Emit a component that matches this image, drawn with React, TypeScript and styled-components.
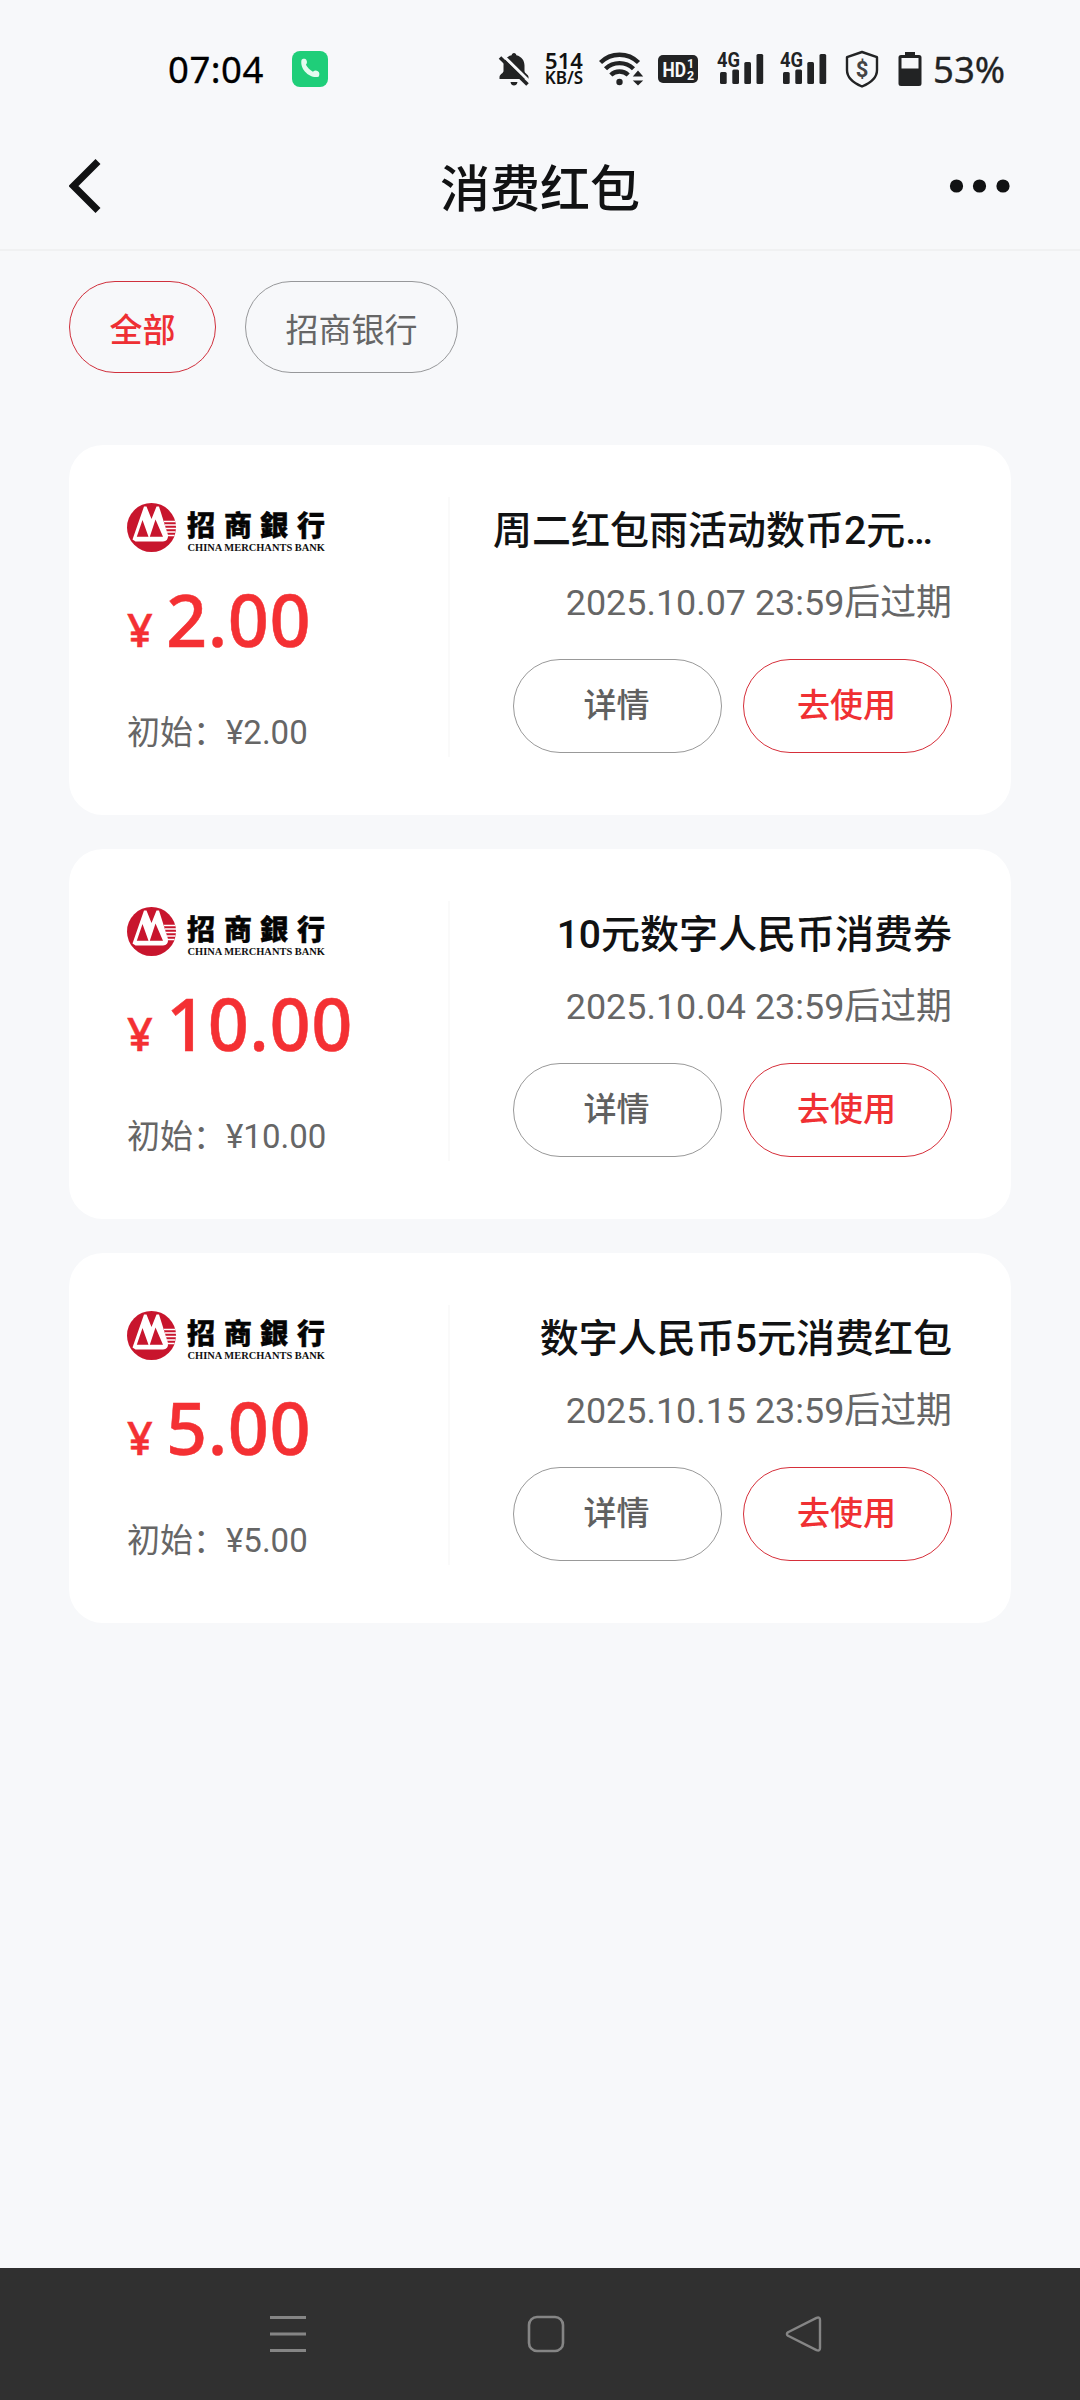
import React from 'react';
import styled, { createGlobalStyle } from 'styled-components';

const cjk = '"Noto Sans CJK SC", sans-serif';

const GlobalStyle = createGlobalStyle`
  * { box-sizing: border-box; }
  body { margin: 0; background: #f7f8fa; }
  button { font: inherit; background: none; border: 0; padding: 0; margin: 0; }
  svg { display: block; flex: none; }
`;

const Screen = styled.div`
  width: 1080px;
  height: 2400px;
  display: flex;
  flex-direction: column;
  background: #f7f8fa;
  font-family: Roboto, ${cjk};
  overflow: hidden;
`;

const StatusBar = styled.div`
  height: 138px;
  padding: 0 75px 0 168px;
  display: flex;
  align-items: center;
  font-family: 'Noto Sans', ${cjk};
  color: #222324;
`;

const StatusText = styled.span<{ $color?: string; $width: number; $gap?: number; $tracking?: number }>`
  width: ${p => p.$width}px;
  margin-left: ${p => p.$gap || 0}px;
  font-size: 36.5px;
  line-height: 54px;
  letter-spacing: ${p => p.$tracking || 0}px;
  white-space: nowrap;
  color: ${p => p.$color || '#222324'};
  -webkit-text-stroke: 0.3px currentColor;
`;

const StatusIcon = styled.svg<{ $gap: number }>`
  margin-left: ${p => p.$gap}px;
  fill: #222324;
`;

const NetSpeed = styled.div`
  width: 42px;
  margin-left: 14px;
  display: grid;
  justify-items: center;
  font-family: 'Noto Sans', sans-serif;
  font-weight: 600;
  color: #111;
`;

const SpeedLine = styled.span<{ $size: number }>`
  font-size: ${p => p.$size}px;
  line-height: 17.5px;
`;

const Header = styled.header`
  height: 113px;
  padding: 0 69px 15px;
  display: grid;
  grid-template-columns: 200px 1fr 200px;
  align-items: center;
  border-bottom: 2px solid #f0f1f2;
`;

const Title = styled.h1`
  margin: 8px 0 0;
  text-align: center;
  font-size: 50px;
  line-height: 60px;
  font-weight: 500;
  color: #111213;
`;

const MoreButton = styled.button`
  justify-self: end;
`;

const Tabs = styled.nav`
  padding: 30px 69px 0;
  display: flex;
  gap: 29px;
`;

const Tab = styled.button<{ $active?: boolean }>`
  height: 92px;
  padding: 8px 39.5px 0;
  border: 1px solid ${p => (p.$active ? '#d0303c' : '#97989a')};
  border-radius: 46px;
  font-size: 33px;
  line-height: 40px;
  font-weight: ${p => (p.$active ? 500 : 400)};
  color: ${p => (p.$active ? '#ee2f33' : '#666')};
`;

const CardList = styled.main`
  flex: 1;
  padding: 72px 69px 0;
  display: flex;
  flex-direction: column;
  gap: 34px;
`;

const Card = styled.article`
  height: 370px;
  padding: 52px 59px 58px 58px;
  display: flex;
  background: #fff;
  border-radius: 34px;
`;

const ValueSide = styled.div`
  width: 323px;
  border-right: 2px solid #fafafa;
  display: flex;
  flex-direction: column;
`;

const Amount = styled.div`
  height: 90px;
  margin-top: 23px;
  display: flex;
  align-items: baseline;
  font-family: 'Noto Sans', ${cjk};
  font-weight: 500;
  color: #f43033;
  line-height: 90px;
  -webkit-text-stroke: 0.5px currentColor;
`;

const Currency = styled.span`
  width: 39px;
  font-size: 45px;
`;

const AmountValue = styled.span`
  font-size: 72px;
  letter-spacing: 0.5px;
`;

const Initial = styled.div`
  margin-top: 49px;
  font-size: 33px;
  line-height: 40px;
  color: #666;
  white-space: nowrap;
`;

const InfoSide = styled.div`
  flex: 1;
  padding-left: 43px;
  display: flex;
  flex-direction: column;
`;

const CardTitle = styled.h2<{ $clipped?: boolean }>`
  margin: 9px 0 0;
  text-align: ${p => (p.$clipped ? 'left' : 'right')};
  font-size: 39px;
  line-height: 50px;
  font-weight: 500;
  color: #111213;
  white-space: nowrap;
`;

const Expiry = styled.div`
  margin-top: 25px;
  text-align: right;
  font-size: 35.9px;
  line-height: 44px;
  color: #666;
  white-space: nowrap;
`;

const Actions = styled.div`
  margin-top: 34px;
  display: flex;
  justify-content: flex-end;
  gap: 21px;
`;

const ActionButton = styled.button<{ $primary?: boolean }>`
  width: 209px;
  height: 94px;
  padding: 0 2px 6px 0;
  border: 1px solid ${p => (p.$primary ? '#d62f3a' : '#999')};
  border-radius: 47px;
  font-size: 33px;
  font-weight: 500;
  color: ${p => (p.$primary ? '#f03033' : '#606060')};
`;

const SystemNav = styled.footer`
  height: 132px;
  padding: 0 257px 0 269px;
  display: flex;
  align-items: center;
  justify-content: space-between;
  background: #303030;
`;

const BellOff = () => (
  <StatusIcon $gap={170} width="32" height="36" viewBox="0 0 32 36">
    <path d="M16 2c1.400 0 2.200 1 2.400 2.300C23.500 5.500 26.500 9.500 26.500 14.500v5.500c0 2.500 4 3.500 4 6v2H1.500v-2c0-3 4-3.500 4-6v-5.500C5.500 9.500 8.500 5.500 13.600 4.300 13.800 3 14.600 2 16 2zM12.500 31h7c-.5 2.600-1.800 3.500-3.500 3.500s-3-.9-3.500-3.500z" />
    <path d="M4 3.500 32 31" stroke="#f7f8fa" strokeWidth="3" />
    <path d="M2 6.500 29.500 33.500" stroke="#222324" strokeWidth="3.600" />
  </StatusIcon>
);

const Wifi = () => (
  <StatusIcon $gap={15} width="46" height="36" viewBox="0 0 46 36">
    <g fill="none" stroke="#222324" strokeWidth="4.400">
      <path d="M1.500 11.500a27 27 0 0 1 38 0" />
      <path d="M6.500 17.800a20 20 0 0 1 28 0" />
      <path d="M11.800 24a12.500 12.500 0 0 1 17.400 0" />
    </g>
    <circle cx="20.500" cy="31" r="3.200" />
    <path d="M39 19.500l5.200 6H33.800zM39 34.500l5.200-5H33.800z" />
  </StatusIcon>
);

const HdBadge = () => (
  <StatusIcon $gap={13} width="40" height="28" viewBox="0 0 40 28">
    <rect width="40" height="28" rx="5" />
    <g fill="#f7f8fa" fontFamily="Roboto, sans-serif" fontWeight="700">
      <text x="4.500" y="21.500" fontSize="21" textLength="23.500" lengthAdjust="spacingAndGlyphs">HD</text>
      <text x="29" y="13" fontSize="12.500">1</text>
      <text x="29" y="24.500" fontSize="12.500">2</text>
    </g>
  </StatusIcon>
);

const Signal = ({ gap }: { gap: number }) => (
  <StatusIcon $gap={gap} width="47" height="40" viewBox="0 -2 47 40">
    <text x="0" y="16" fontSize="20.500" fontWeight="700" fontFamily="Roboto, sans-serif" textLength="23" lengthAdjust="spacingAndGlyphs">4G</text>
    <rect x="3" y="21" width="6.700" height="12" rx="1.500" />
    <rect x="15.300" y="18.500" width="6.700" height="14.500" rx="1.500" />
    <rect x="27.300" y="11" width="6.700" height="22" rx="1.500" />
    <rect x="39.500" y="3" width="6.700" height="30" rx="1.500" />
  </StatusIcon>
);

const ShieldDollar = () => (
  <StatusIcon $gap={18} width="34" height="38" viewBox="0 0 34 38">
    <path d="M17 2 32 7.200V20c0 8-6.500 13-15 16.500C8.500 33 2 28 2 20V7.200z" fill="none" stroke="#222324" strokeWidth="2.400" strokeLinejoin="round" />
    <text x="17" y="26.500" textAnchor="middle" fontSize="22" fontWeight="700" fill="#444" fontFamily="Roboto, sans-serif">$</text>
  </StatusIcon>
);

const Battery = () => (
  <StatusIcon $gap={19} width="24" height="36" viewBox="0 0 24 36">
    <path fillRule="evenodd" d="M7 1h10v3h4a2.500 2.500 0 0 1 2.500 2.500v26a2.500 2.500 0 0 1-2.500 2.500H3A2.500 2.500 0 0 1 .5 32.500v-26A2.500 2.500 0 0 1 3 4h4zM3.500 7v10.500h17V7z" />
  </StatusIcon>
);

const BankLogo = () => (
  <svg width="200" height="60" viewBox="0 0 200 60">
    <circle cx="24.500" cy="30.500" r="24.500" fill="#c8152d" />
    <path d="M5.500 42.500 17 9.500h2.500l5 12.500 5-12.500H32L41 38q.5 6-5 6.500H8.500z" fill="#fff" />
    <path d="M9.800 39.800 15.500 23l6 16.800zM22.800 39.800 28.500 22.500 36 39.800z" fill="#c8152d" />
    <path d="M37 24.500h11.200M38 28h11M39 31.500h10M40 35h8.500M40.500 38.500h7" stroke="#fff" strokeWidth="1.500" />
    <g fill="#050505" stroke="#050505" strokeWidth=".4" fontFamily='"Noto Sans CJK TC", sans-serif' fontWeight="900" fontSize="28">
      <text x="60" y="38.500">招</text>
      <text x="97" y="38.500">商</text>
      <text x="133" y="38.500">銀</text>
      <text x="170" y="38.500">行</text>
    </g>
    <text x="60.500" y="54" fill="#111" fontFamily='"Liberation Serif", serif' fontWeight="700" fontSize="9.800" textLength="137.500" lengthAdjust="spacingAndGlyphs">CHINA MERCHANTS BANK</text>
  </svg>
);

const LogoSlot = styled.div`
  height: 54px;
`;

interface Coupon {
  title: string;
  clipped?: boolean;
  value: string;
  expires: string;
}

const coupons: Coupon[] = [
  { title: '周二红包雨活动数币2元…', clipped: true, value: '2.00', expires: '2025.10.07 23:59' },
  { title: '10元数字人民币消费券', value: '10.00', expires: '2025.10.04 23:59' },
  { title: '数字人民币5元消费红包', value: '5.00', expires: '2025.10.15 23:59' },
];

const CouponCard = ({ title, clipped, value, expires }: Coupon) => (
  <Card>
    <ValueSide>
      <LogoSlot>
        <BankLogo />
      </LogoSlot>
      <Amount>
        <Currency>¥</Currency>
        <AmountValue>{value}</AmountValue>
      </Amount>
      <Initial>初始：¥{value}</Initial>
    </ValueSide>
    <InfoSide>
      <CardTitle $clipped={clipped}>{title}</CardTitle>
      <Expiry>{expires}后过期</Expiry>
      <Actions>
        <ActionButton>详情</ActionButton>
        <ActionButton $primary>去使用</ActionButton>
      </Actions>
    </InfoSide>
  </Card>
);

export default function App() {
  return (
    <>
      <GlobalStyle />
      <Screen>
        <StatusBar>
          <StatusText $width={95} $color="#000" $tracking={0.5}>07:04</StatusText>
          <StatusIcon $gap={29} width="36" height="36" viewBox="0 0 36 36">
            <rect width="36" height="36" rx="8" fill="#1fce79" />
            <path d="M9.500 9c1-1.600 4-1.600 5 .2.800 1.600.6 3-.6 4.500 1.600 3 4 5.300 7 7 1.800-1.500 3.300-1.500 5-.5 1.800 1.200 1.900 3.400.7 5.500-8.500 2.300-19-7.200-17.100-16.700z" fill="#e4fbef" />
          </StatusIcon>
          <BellOff />
          <NetSpeed>
            <SpeedLine $size={22}>514</SpeedLine>
            <SpeedLine $size={17}>KB/S</SpeedLine>
          </NetSpeed>
          <Wifi />
          <HdBadge />
          <Signal gap={19} />
          <Signal gap={16} />
          <ShieldDollar />
          <Battery />
          <StatusText $width={72} $gap={11}>53%</StatusText>
        </StatusBar>
        <Header>
          <button aria-label="返回">
            <svg width="32" height="54" viewBox="0 0 32 54">
              <path d="M29 2.500 4.500 27 29 51.500" fill="none" stroke="#111213" strokeWidth="7" />
            </svg>
          </button>
          <Title>消费红包</Title>
          <MoreButton aria-label="更多">
            <svg width="62" height="14" viewBox="0 0 62 14" fill="#111213">
              <circle cx="7.500" cy="7" r="6.600" />
              <circle cx="30.500" cy="7" r="6.600" />
              <circle cx="54" cy="7" r="6.600" />
            </svg>
          </MoreButton>
        </Header>
        <Tabs>
          <Tab $active>全部</Tab>
          <Tab>招商银行</Tab>
        </Tabs>
        <CardList>
          {coupons.map(c => (
            <CouponCard key={c.title} {...c} />
          ))}
        </CardList>
        <SystemNav>
          <svg width="38" height="38" viewBox="0 0 38 38" stroke="#858585" strokeWidth="3">
            <path d="M1 2.500h36M1 19h36M1 35.500h36" />
          </svg>
          <svg width="38" height="38" viewBox="0 0 38 38" fill="none" stroke="#858585" strokeWidth="2.600">
            <rect x="2" y="2" width="34" height="34" rx="8" />
          </svg>
          <svg width="38" height="38" viewBox="0 0 38 38" fill="none" stroke="#858585" strokeWidth="2.400" strokeLinejoin="round">
            <path d="M3 17.200 31.500 2.900Q35 1.500 35 5v28q0 3.500-3.500 2.100L3 20.800Q.8 19 3 17.200z" />
          </svg>
        </SystemNav>
      </Screen>
    </>
  );
}
